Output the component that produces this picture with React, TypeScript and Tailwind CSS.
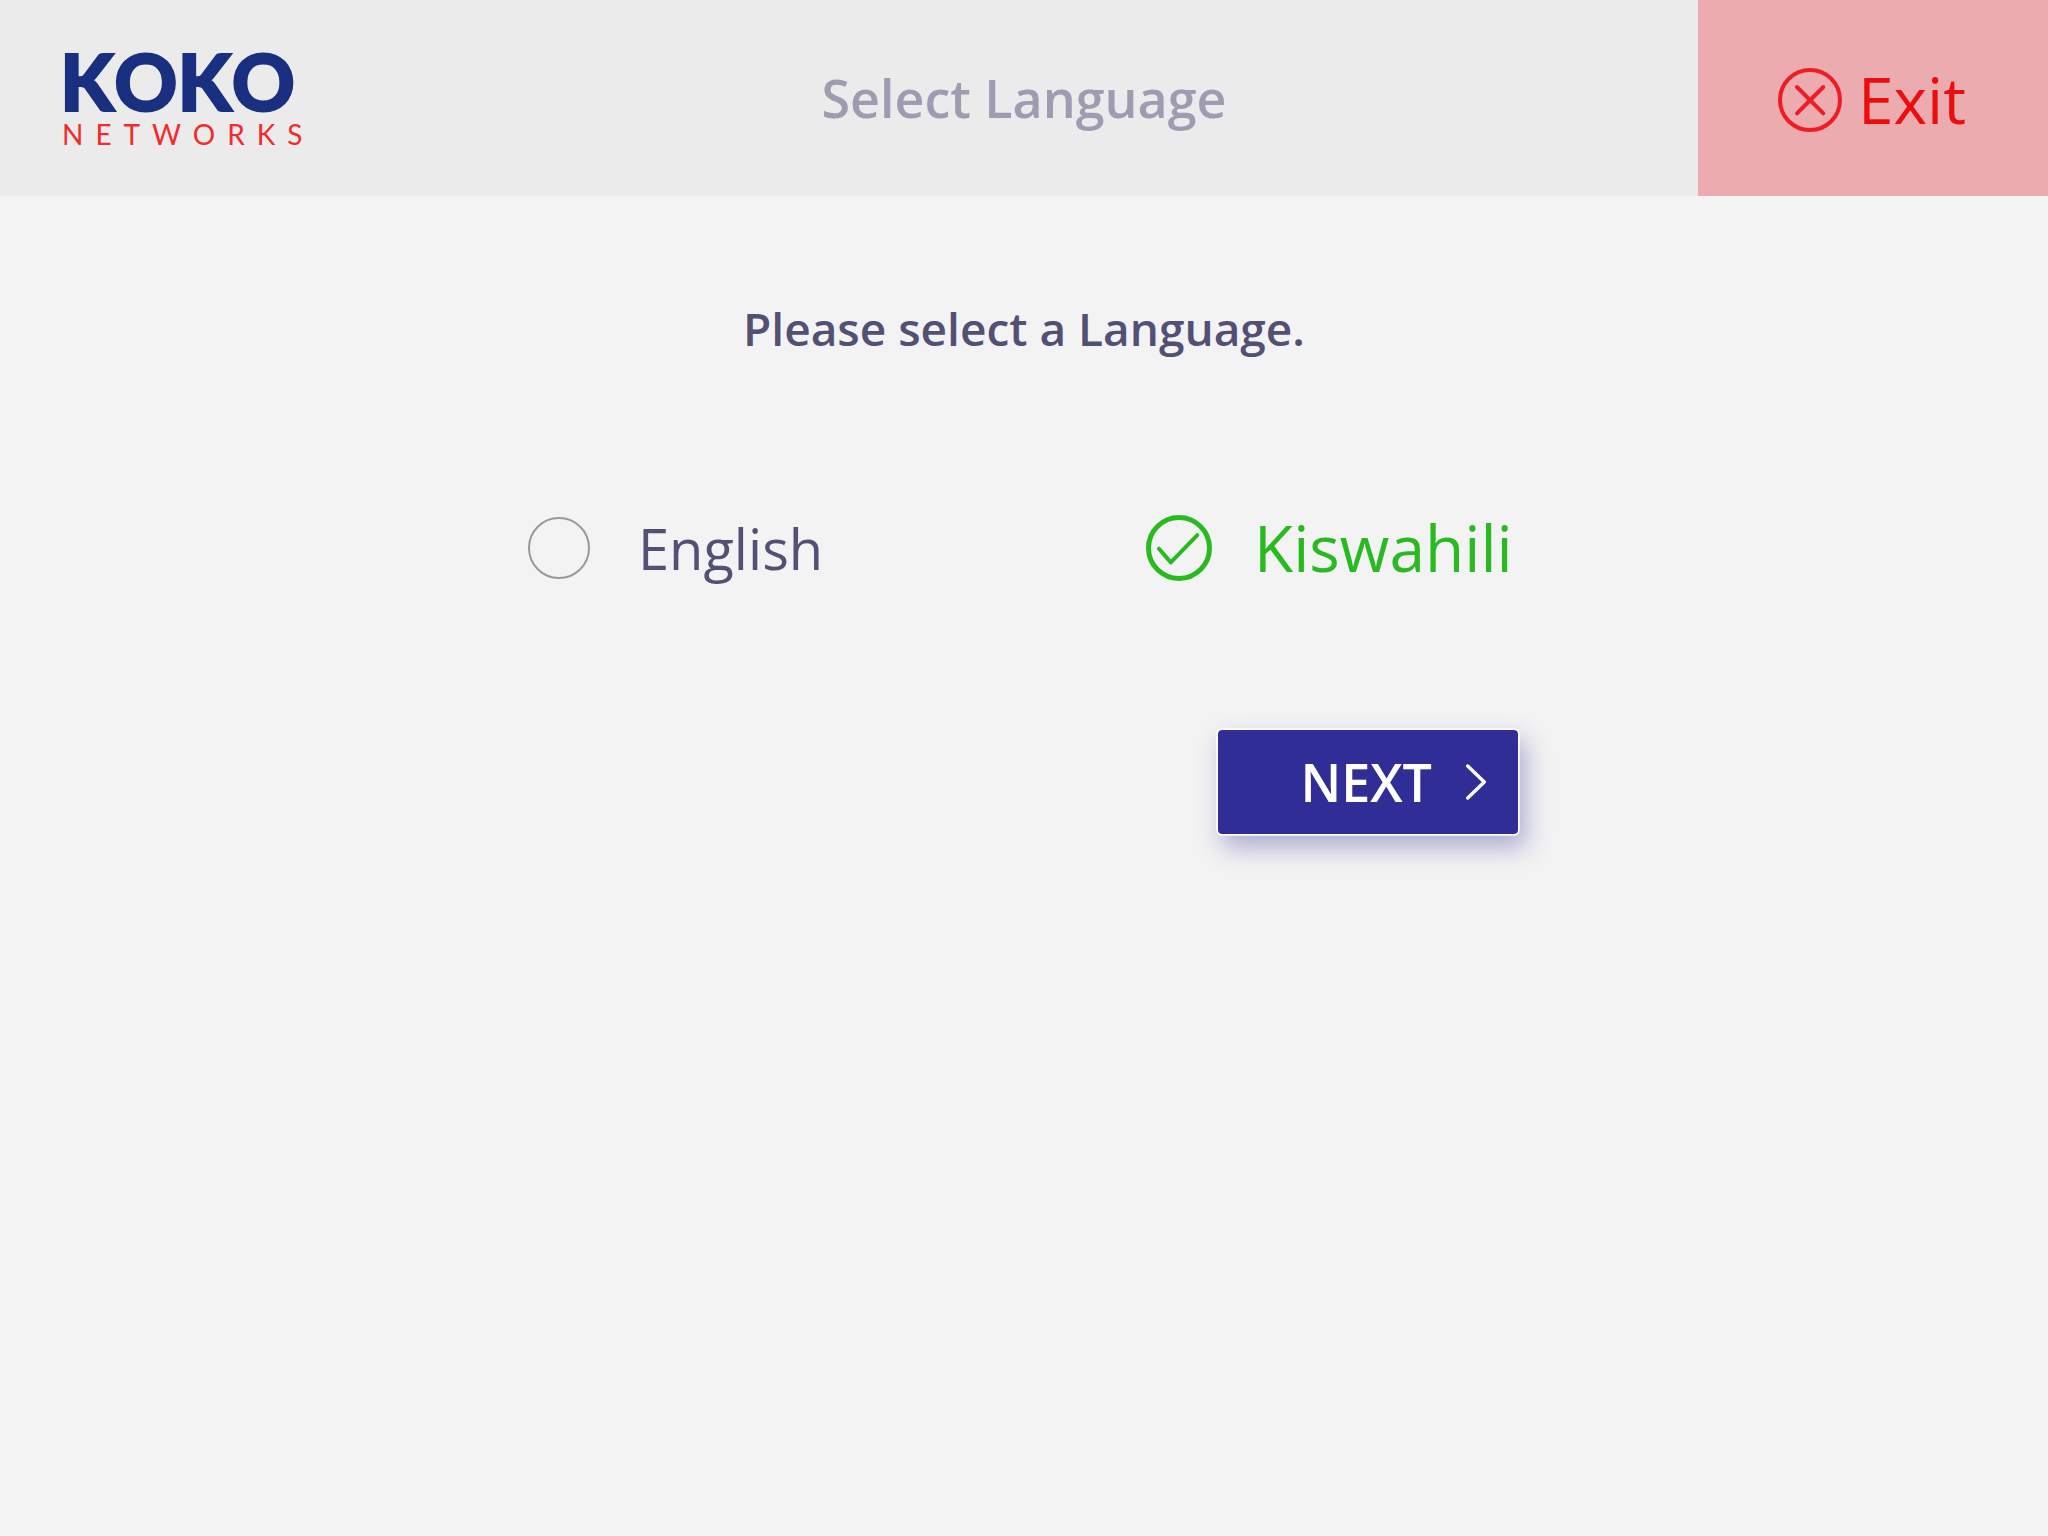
import { useState } from "react";

function Logo() {
  return (
    <div className="flex flex-col pt-0.5 pl-[60px] font-['Lato',sans-serif]">
      <span className="text-[78px] leading-[70px] font-black text-[#18307f] [-webkit-text-stroke:2px_#18307f] [font-kerning:none]">KOKO</span>
      <span className="pl-0.5 text-[28px] leading-9 tracking-[12px] text-[#f22a2a]">NETWORKS</span>
    </div>
  );
}

function CloseCircleIcon() {
  return (
    <svg viewBox="0 0 64 64" className="size-16" fill="none" stroke="#ee1c25" strokeWidth="4" strokeLinecap="round" aria-hidden="true">
      <circle cx="32" cy="32" r="30" />
      <path d="M19 19 45.3 45.3M45.3 19 19 45.3" />
    </svg>
  );
}

function Header() {
  return (
    <header className="grid h-[196px] grid-cols-[350px_1fr_350px] items-center bg-[#ebebeb]">
      <Logo />
      <h1 className="text-center text-[52px] leading-[64px] font-semibold text-[#9e9cb0]">Select Language</h1>
      <button type="button" className="flex h-full items-center justify-center gap-4 bg-[#ecabae] pt-1 pr-0.5 text-[64px] leading-[64px] text-[#eb0e0e]">
        <CloseCircleIcon />
        Exit
      </button>
    </header>
  );
}

type OptionProps = { name: string; checked: boolean; onSelect: () => void };

function LanguageOption({ name, checked, onSelect }: OptionProps) {
  return (
    <label className={checked ? "flex items-center gap-[42px] text-[64px] leading-[66px] text-[#28ba20]" : "flex items-center gap-12 text-[56px] leading-[66px] text-[#525075]"}>
      <span className="relative flex">
        <input
          type="radio"
          name="language"
          checked={checked}
          onChange={onSelect}
          className="size-[62px] appearance-none rounded-full border-2 border-[#999999] checked:size-[66px] checked:border-[5px] checked:border-[#28ba20]"
        />
        {checked && (
          <svg viewBox="0 0 66 66" className="pointer-events-none absolute inset-0 size-full" fill="none" stroke="#28ba20" strokeWidth="4" strokeLinecap="round" strokeLinejoin="round" aria-hidden="true">
            <path d="M13 33.7 24.8 47.4 51.3 20.2" />
          </svg>
        )}
      </span>
      {name}
    </label>
  );
}

export default function App() {
  const [language, setLanguage] = useState("Kiswahili");
  return (
    <div className="min-h-screen bg-[#f3f3f3] font-['Open_Sans',sans-serif]">
      <Header />
      <main className="mx-auto max-w-[992px] pt-[100px]">
        <h2 className="text-center text-[46px] leading-[64px] font-semibold text-[#525075]">Please select a Language.</h2>
        <div role="radiogroup" aria-label="Language" className="mt-[155px] grid grid-cols-[618px_auto]">
          {["English", "Kiswahili"].map((name) => (
            <LanguageOption key={name} name={name} checked={language === name} onSelect={() => setLanguage(name)} />
          ))}
        </div>
        <div className="mt-[147px] flex justify-end">
          <button
            type="button"
            className="flex h-[108px] w-[304px] items-center justify-end gap-[34px] rounded-md border-2 border-white/70 bg-[#312d96] bg-clip-padding pr-8 text-[52px] leading-[64px] font-semibold text-white shadow-[6px_12px_24px_rgba(49,45,150,0.35)]"
          >
            NEXT
            <svg viewBox="0 0 20 36" className="h-9 w-5" fill="none" stroke="currentColor" strokeWidth="3.4" strokeLinecap="round" strokeLinejoin="round" aria-hidden="true">
              <path d="M1.7 2 18.3 18 1.7 34" />
            </svg>
          </button>
        </div>
      </main>
    </div>
  );
}
